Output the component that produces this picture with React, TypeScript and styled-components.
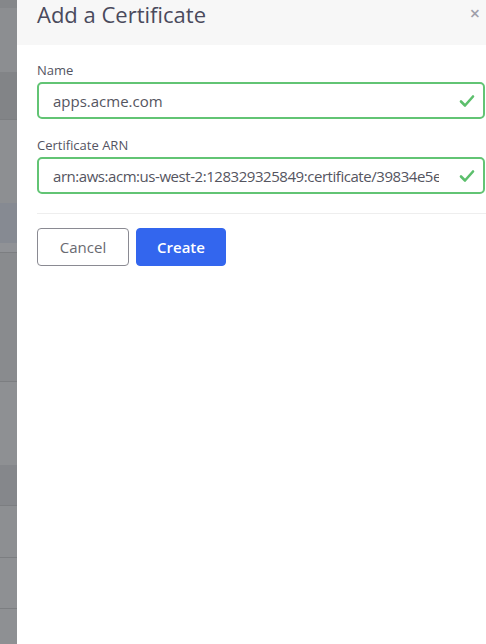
import React from "react";
import styled, { createGlobalStyle } from "styled-components";

const Global = createGlobalStyle`
  html, body { margin: 0; padding: 0; height: 100%; }
  body { font-family: "Open Sans", "DejaVu Sans", sans-serif; overflow: hidden; }
  #root { height: 100%; }
`;

const Page = styled.div`
  display: flex;
  width: 486px;
  height: 644px;
  overflow: hidden;
`;

const Backdrop = styled.div`
  width: 17px;
  flex: none;
  display: flex;
  flex-direction: column;
  background: #8b8d90;
`;

const Band = styled.div<{ $h: number; $c: string; $line?: boolean }>`
  height: ${(p) => p.$h}px;
  flex: none;
  background: ${(p) => p.$c};
  border-bottom: ${(p) => (p.$line ? "1px solid #7c7e81" : "none")};
  box-sizing: border-box;
`;

const Panel = styled.div`
  flex: 1;
  background: #fff;
  display: flex;
  flex-direction: column;
  min-width: 0;
`;

const Header = styled.div`
  height: 45px;
  background: #f7f7f7;
  display: flex;
  align-items: flex-start;
  justify-content: space-between;
  padding: 0 6px 0 20px;
  box-sizing: border-box;
`;

const Title = styled.h2`
  margin: 0;
  font-size: 22px;
  font-weight: 500;
  color: #4a4a5c;
  line-height: 28px;
`;

const Close = styled.span`
  color: #a0a0aa;
  font-size: 18px;
  line-height: 20px;
  margin-top: 3px;
  font-weight: 600;
`;

const Body = styled.div`
  padding: 17px 0 0 20px;
  display: flex;
  flex-direction: column;
`;

const Field = styled.div`
  display: flex;
  flex-direction: column;
  gap: 4px;
  margin-bottom: 18px;
`;

const Label = styled.label`
  font-size: 13px;
  color: #545462;
  line-height: 16px;
`;

const InputBox = styled.div`
  height: 37px;
  border: 2px solid #62c474;
  border-radius: 5px;
  box-sizing: border-box;
  display: flex;
  align-items: center;
  padding: 0 8px 0 14px;
  margin-right: 1px;
  gap: 20px;
`;

const Value = styled.span<{ $tight?: boolean }>`
  flex: 1;
  min-width: 0;
  overflow: hidden;
  white-space: nowrap;
  font-size: 15px;
  letter-spacing: ${(p) => (p.$tight ? "-0.45px" : "0")};
  color: #55555f;
`;

const Divider = styled.div`
  height: 1px;
  margin-top: 1px;
  background: #eeeeee;
`;

const Actions = styled.div`
  display: flex;
  gap: 7px;
  margin-top: 14px;
`;

const Button = styled.button<{ $primary?: boolean }>`
  height: 38px;
  border-radius: 4px;
  font-family: inherit;
  font-size: 15px;
  font-weight: ${(p) => (p.$primary ? 600 : 500)};
  padding: 0;
  width: ${(p) => (p.$primary ? 90 : 92)}px;
  border: 1px solid ${(p) => (p.$primary ? "#3366ee" : "#8a8a92")};
  background: ${(p) => (p.$primary ? "#3366ee" : "#fff")};
  color: ${(p) => (p.$primary ? "#fff" : "#6a6a72")};
  box-sizing: border-box;
`;

const Check = () => (
  <svg width="16" height="14" viewBox="0 0 16 14" fill="none">
    <path d="M2 7.5 L6 11.5 L14 2.5" stroke="#5cbf6c" strokeWidth="2.6" strokeLinecap="round" strokeLinejoin="round" />
  </svg>
);

export default function App() {
  return (
    <Page>
      <Global />
      <Backdrop>
        <Band $h={8} $c="#85878a" />
        <Band $h={64} $c="#8c8e91" />
        <Band $h={48} $c="#828487" $line />
        <Band $h={83} $c="#8d8f92" />
        <Band $h={40} $c="#868a92" />
        <Band $h={10} $c="#909296" $line />
        <Band $h={129} $c="#898b8e" $line />
        <Band $h={83} $c="#8e9093" />
        <Band $h={41} $c="#85878b" $line />
        <Band $h={52} $c="#8d8f92" $line />
        <Band $h={51} $c="#8e9093" $line />
        <Band $h={95} $c="#8e9093" />
      </Backdrop>
      <Panel>
        <Header>
          <Title>Add a Certificate</Title>
          <Close>×</Close>
        </Header>
        <Body>
          <Field>
            <Label>Name</Label>
            <InputBox>
              <Value>apps.acme.com</Value>
              <Check />
            </InputBox>
          </Field>
          <Field>
            <Label>Certificate ARN</Label>
            <InputBox>
              <Value $tight>arn:aws:acm:us-west-2:128329325849:certificate/39834e5e-7a2b</Value>
              <Check />
            </InputBox>
          </Field>
          <Divider />
          <Actions>
            <Button>Cancel</Button>
            <Button $primary>Create</Button>
          </Actions>
        </Body>
      </Panel>
    </Page>
  );
}
